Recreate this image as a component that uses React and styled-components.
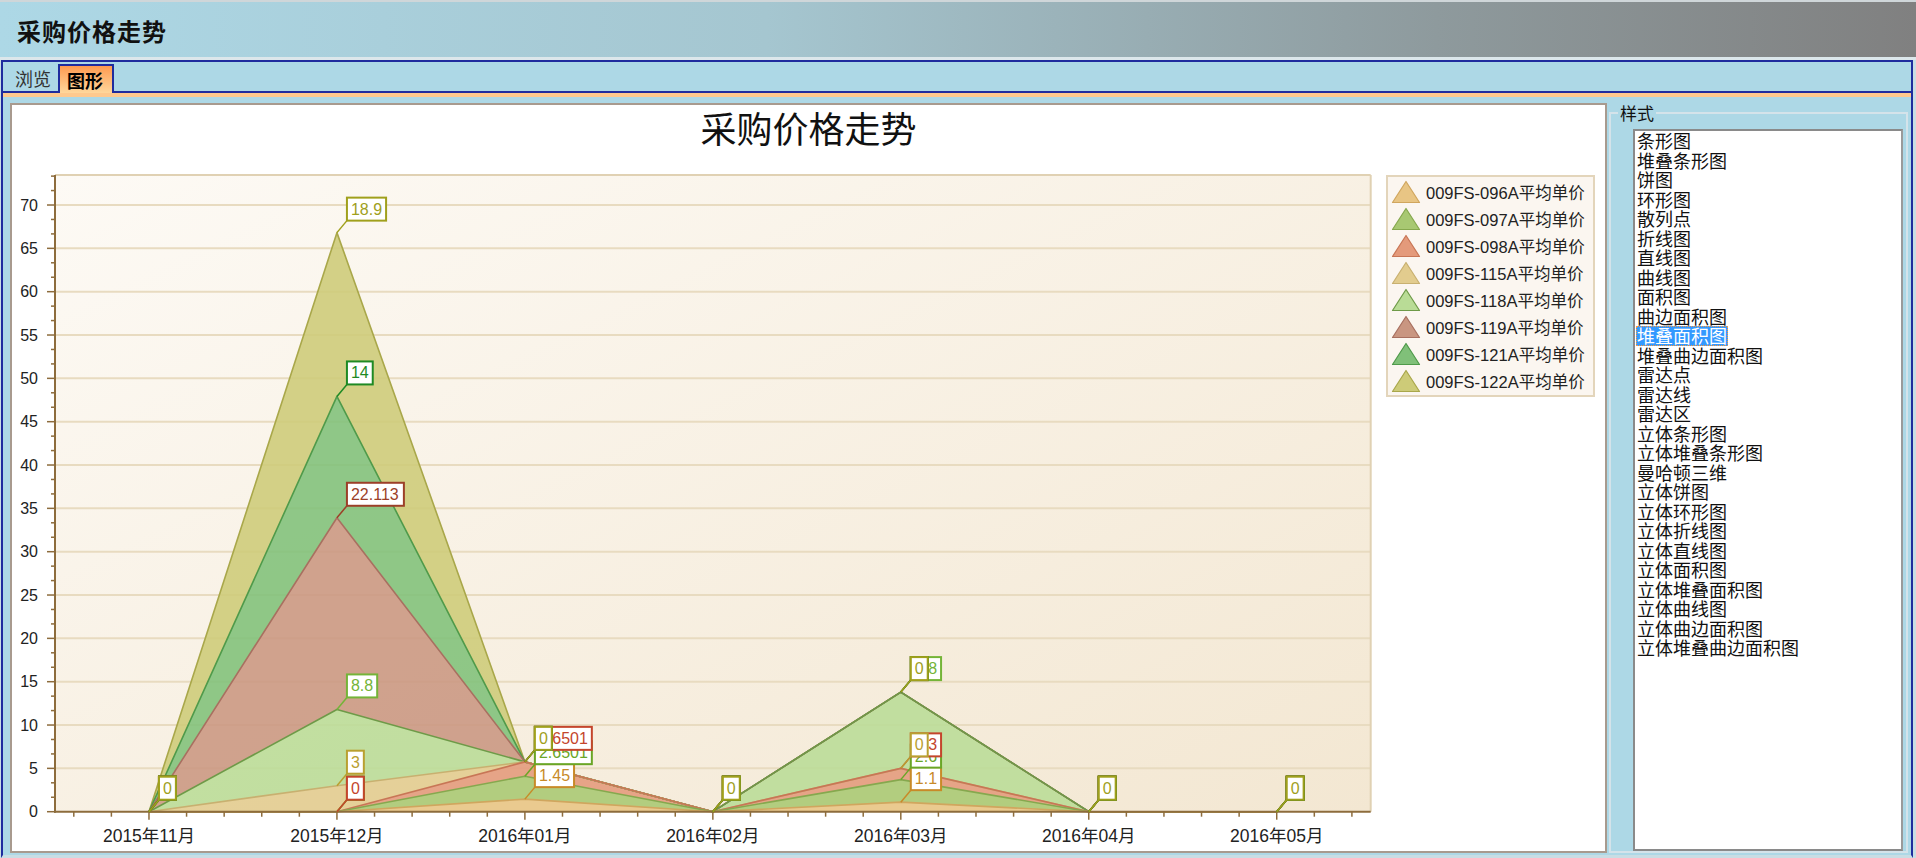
import React from 'react';
import styled, { createGlobalStyle } from 'styled-components';

const NAVY = '#1f2c9e';
const FONT = `"Liberation Sans", "Noto Sans CJK SC", sans-serif`;
const CJK = `"Noto Sans CJK SC", "Liberation Sans", sans-serif`;

const GlobalStyle = createGlobalStyle`
  *, *::before, *::after { box-sizing: border-box; }
  html, body { margin: 0; padding: 0; }
  body { width: 1916px; height: 858px; overflow: hidden; background: #c9dde4; font-family: ${FONT}; }
  #root { width: 1916px; height: 858px; }
`;

const Page = styled.div`
  display: flex;
  flex-direction: column;
  width: 1916px;
  height: 858px;
`;

const Header = styled.header`
  flex: none;
  height: 57px;
  border-top: 2px solid #cfd6d9;
  background: linear-gradient(to right, #add8e6 0%, #a5c6d0 40%, #8e9a9d 75%, #808080 100%);
  display: flex;
  align-items: center;
  padding: 1px 0 0 17px;
`;

const HeaderTitle = styled.h1`
  margin: 0;
  font-family: ${CJK};
  font-size: 24px;
  font-weight: 700;
  letter-spacing: 1px;
  color: #111;
`;

const HeaderGap = styled.div`
  flex: none;
  height: 3px;
  background: #dce7eb;
`;

const Panel = styled.section`
  flex: 1;
  min-height: 0;
  margin: 0 3px 0 1px;
  border: 2px solid ${NAVY};
  border-bottom: 3px solid #c9dde4;
  background: #add8e6;
  display: flex;
  flex-direction: column;
`;

const TabBar = styled.nav`
  flex: none;
  height: 31px;
  display: flex;
  align-items: flex-end;
  padding-left: 5px;
  border-bottom: 2px solid ${NAVY};
`;

const Tab = styled.div`
  font-family: ${CJK};
  font-size: 18px;
  display: flex;
  align-items: center;
  color: ${p => (p.$active ? '#000' : '#333')};
  font-weight: ${p => (p.$active ? 700 : 400)};
  height: ${p => (p.$active ? '29px' : '27px')};
  margin-bottom: ${p => (p.$active ? '-2px' : '0')};
  margin-left: ${p => (p.$active ? '1px' : '0')};
  padding: ${p => (p.$active ? '0 9px 0 7px' : '0 6px 0 7px')};
  border: ${p => (p.$active ? `2px solid ${NAVY}` : 'none')};
  border-bottom: none;
  background: ${p => (p.$active ? 'linear-gradient(#ff9a50, #ffd79c)' : 'transparent')};
`;

const TabStrip = styled.div`
  flex: none;
  height: 4px;
  background: #ffc98e;
`;

const Content = styled.div`
  flex: 1;
  min-height: 0;
  display: flex;
  padding: 6px 0 2px 7px;
`;

const ChartBox = styled.div`
  flex: none;
  width: 1597px;
  border: 2px solid #a89a8e;
  background: #fff;
  display: flex;
  flex-direction: column;
`;

const ChartTitle = styled.h2`
  margin: 0;
  height: 50px;
  line-height: 44px;
  text-align: center;
  font-family: ${CJK};
  font-size: 36px;
  font-weight: 400;
  color: #111;
`;

const ChartRow = styled.div`
  flex: 1;
  display: flex;
  align-items: flex-start;
`;

const PlotSvg = styled.svg`
  display: block;
  flex: none;
`;

const LegendBox = styled.ul`
  list-style: none;
  margin: 20px 0 0 8px;
  padding: 1px 8px 1px 3px;
  border: 2px solid #e3d5bb;
  background: #fbf6f0;
  display: flex;
  flex-direction: column;
`;

const LegendItem = styled.li`
  height: 27px;
  display: flex;
  align-items: center;
  gap: 5px;
  font-family: ${FONT};
  font-size: 16.5px;
  color: #222;
  white-space: nowrap;
`;

const SidePanel = styled.aside`
  flex: 1;
  min-width: 0;
  display: flex;
  flex-direction: column;
  padding: 0 3px 0 2px;
`;

const GroupHeader = styled.div`
  flex: none;
  height: 20px;
  display: flex;
  align-items: center;
  font-family: ${CJK};
  font-size: 17px;
  color: #111;
  &::before {
    content: '';
    width: 9px;
    height: 2px;
    background: #d4e3ea;
  }
  &::after {
    content: '';
    flex: 1;
    height: 2px;
    background: #d4e3ea;
  }
`;

const GroupLabel = styled.span`
  padding: 0 2px;
  line-height: 20px;
`;

const GroupBody = styled.div`
  flex: 1;
  min-height: 0;
  margin-top: -9px;
  border: 2px solid #d4e3ea;
  border-top: none;
  padding: 15px 3px 0 22px;
  display: flex;
  flex-direction: column;
`;

const ListBox = styled.div`
  flex: 1;
  min-height: 0;
  background: #fff;
  border: 2px solid #8a8a8a;
  border-right-color: #9a9a9a;
  padding-left: 1px;
  overflow: hidden;
`;

const ListInner = styled.ul`
  list-style: none;
  margin: 0;
  padding: 0;
`;

const ListItem = styled.li`
  width: fit-content;
  padding: 0 1px;
  font-family: ${CJK};
  font-size: 18px;
  line-height: 19.5px;
  white-space: nowrap;
  color: ${p => (p.$selected ? '#fff' : '#111')};
  background: ${p => (p.$selected ? '#3399ff' : 'transparent')};
  outline: ${p => (p.$selected ? '1px dotted #ff9a3c' : 'none')};
  outline-offset: -1px;
`;

/* ---------- data ---------- */

const CATS = ['2015年11月', '2015年12月', '2016年01月', '2016年02月', '2016年03月', '2016年04月', '2016年05月'];

const SERIES = [
  { name: '009FS-096A平均单价', fill: '#e8c584', line: '#d0a65e', label: '#c88a28', vals: [0, 0, 1.45, 0, 1.1, 0, 0] },
  { name: '009FS-097A平均单价', fill: '#a8c872', line: '#86a84e', label: '#6aa626', vals: [0, 0, 2.6501, 0, 2.6, 0, 0] },
  { name: '009FS-098A平均单价', fill: '#e49a7b', line: '#c87656', label: '#c4452c', vals: [0, 0, 1.6501, 0, 1.3, 0, 0] },
  { name: '009FS-115A平均单价', fill: '#e2cc8e', line: '#c8b070', label: '#b9a030', vals: [0, 3, 0, 0, 0, 0, 0] },
  { name: '009FS-118A平均单价', fill: '#b9dc96', line: '#6e9a48', label: '#74b438', vals: [0, 8.8, 0, 0, 8.8, 0, 0] },
  { name: '009FS-119A平均单价', fill: '#c99681', line: '#a87060', label: '#9c3f28', vals: [0, 22.113, 0, 0, 0, 0, 0] },
  { name: '009FS-121A平均单价', fill: '#80c079', line: '#4f9a4a', label: '#1e8a24', vals: [0, 14, 0, 0, 0, 0, 0] },
  { name: '009FS-122A平均单价', fill: '#cdcb78', line: '#a9a74a', label: '#a0a01c', vals: [0, 18.9, 0, 0, 0, 0, 0] },
];

const STYLES = ['条形图', '堆叠条形图', '饼图', '环形图', '散列点', '折线图', '直线图', '曲线图', '面积图', '曲边面积图', '堆叠面积图', '堆叠曲边面积图', '雷达点', '雷达线', '雷达区', '立体条形图', '立体堆叠条形图', '曼哈顿三维', '立体饼图', '立体环形图', '立体折线图', '立体直线图', '立体面积图', '立体堆叠面积图', '立体曲线图', '立体曲边面积图', '立体堆叠曲边面积图'];

const PL = 55, PR = 1370.7, PT = 175, PB = 811.7, SCALE = 8.667;
const CW = (PR - PL) / 7;
const cx = i => PL + CW / 2 + CW * i;
const yv = v => PB - v * SCALE;
const textW = s => [...s].reduce((a, c) => a + (c === '.' ? 4.45 : 8.9), 0);

function PlotChart() {
  let base = CATS.map(() => 0);
  const layers = SERIES.map(s => {
    const bottom = base;
    const top = base.map((b, i) => +(b + s.vals[i]).toFixed(4));
    base = top;
    return { ...s, bottom, top };
  });
  const areaPts = l =>
    [...l.top.map((v, i) => `${cx(i)},${yv(v)}`), ...l.bottom.map((v, i) => `${cx(i)},${yv(v)}`).reverse()].join(' ');
  const linePts = l => l.top.map((v, i) => `${cx(i)},${yv(v)}`).join(' ');

  const grid = [];
  for (let v = 5; v <= 70; v += 5) grid.push(v);
  const yTicks = [];
  for (let k = 0; k * 5 / 3 <= 73.4; k++) yTicks.push(k);
  const xTicks = [];
  for (let t = -2; cx(0) + (t * CW) / 5 <= PR; t++) xTicks.push(t);

  return (
    <PlotSvg width={1366} height={696} viewBox="12 155 1366 696">
      <defs>
        <linearGradient id="plotBg" x1="0" y1="0" x2="1" y2="1">
          <stop offset="0" stopColor="#fdfaf5" />
          <stop offset="1" stopColor="#f3e7d2" />
        </linearGradient>
      </defs>
      <rect x={PL} y={PT} width={PR - PL} height={PB - PT} fill="url(#plotBg)" />
      {grid.map(v => (
        <line key={v} x1={PL} x2={PR} y1={yv(v)} y2={yv(v)} stroke="#e8dbc0" strokeWidth="2" />
      ))}
      <line x1={PL} x2={PR} y1={PT} y2={PT} stroke="#e0d1b3" strokeWidth="2" />
      <line x1={PR} x2={PR} y1={PT} y2={PB} stroke="#e0d1b3" strokeWidth="2" />
      {layers.map(l => (
        <polygon key={l.name} points={areaPts(l)} fill={l.fill} fillOpacity="0.88" />
      ))}
      {[...layers].reverse().map(l => (
        <polyline key={l.name} points={linePts(l)} fill="none" stroke={l.line} strokeWidth="1.6" strokeLinejoin="round" />
      ))}
      <line x1={PL} x2={PL} y1={PT} y2={PB + 1} stroke="#8d6c3c" strokeWidth="2" />
      <line x1={PL - 1} x2={PR} y1={PB} y2={PB} stroke="#8d6c3c" strokeWidth="2" />
      {yTicks.map(k => (
        <line key={k} x1={k % 3 === 0 ? PL - 8 : PL - 4} x2={PL} y1={yv((k * 5) / 3)} y2={yv((k * 5) / 3)} stroke="#8d6c3c" strokeWidth="1.5" />
      ))}
      {xTicks.map(t => (
        <line key={t} x1={cx(0) + (t * CW) / 5} x2={cx(0) + (t * CW) / 5} y1={PB} y2={PB + (t % 5 === 0 ? 8 : 5)} stroke="#8d6c3c" strokeWidth="1.5" />
      ))}
      {[0, ...grid].map(v => (
        <text key={v} x={38} y={yv(v)} textAnchor="end" dominantBaseline="central" fontFamily={FONT} fontSize="16" fill="#222">
          {v}
        </text>
      ))}
      {CATS.map((c, i) => (
        <text key={c} x={cx(i)} y={836} textAnchor="middle" dominantBaseline="central" fontFamily={FONT} fontSize="17.5" fill="#222">
          {c}
        </text>
      ))}
      {layers.map(l =>
        l.top.map((cum, i) => {
          const txt = String(l.vals[i]);
          const x = cx(i);
          const y = yv(cum);
          const w = textW(txt) + 8;
          return (
            <g key={l.name + i}>
              <line x1={x} y1={y} x2={x + 10} y2={y - 12} stroke={l.label} strokeWidth="1.5" />
              <rect x={x + 10} y={y - 35} width={w} height={23} fill="#fff" stroke={l.label} strokeWidth="2" />
              <text x={x + 14} y={y - 23.5} dominantBaseline="central" fontFamily={FONT} fontSize="16" fill={l.label}>
                {txt}
              </text>
            </g>
          );
        })
      )}
    </PlotSvg>
  );
}

function LegendTriangle({ fill, line }) {
  return (
    <svg width="30" height="24" viewBox="0 0 30 24">
      <polygon points="15,1.5 28.5,22.5 1.5,22.5" fill={fill} stroke={line} strokeWidth="1.2" strokeLinejoin="round" />
    </svg>
  );
}

export default function App() {
  return (
    <>
      <GlobalStyle />
      <Page>
        <Header>
          <HeaderTitle>采购价格走势</HeaderTitle>
        </Header>
        <HeaderGap />
        <Panel>
          <TabBar>
            <Tab>浏览</Tab>
            <Tab $active>图形</Tab>
          </TabBar>
          <TabStrip />
          <Content>
            <ChartBox>
              <ChartTitle>采购价格走势</ChartTitle>
              <ChartRow>
                <PlotChart />
                <LegendBox>
                  {SERIES.map(s => (
                    <LegendItem key={s.name}>
                      <LegendTriangle fill={s.fill} line={s.line} />
                      {s.name}
                    </LegendItem>
                  ))}
                </LegendBox>
              </ChartRow>
            </ChartBox>
            <SidePanel>
              <GroupHeader>
                <GroupLabel>样式</GroupLabel>
              </GroupHeader>
              <GroupBody>
                <ListBox>
                  <ListInner>
                    {STYLES.map((s, i) => (
                      <ListItem key={s} $selected={i === 10}>
                        {s}
                      </ListItem>
                    ))}
                  </ListInner>
                </ListBox>
              </GroupBody>
            </SidePanel>
          </Content>
        </Panel>
      </Page>
    </>
  );
}
